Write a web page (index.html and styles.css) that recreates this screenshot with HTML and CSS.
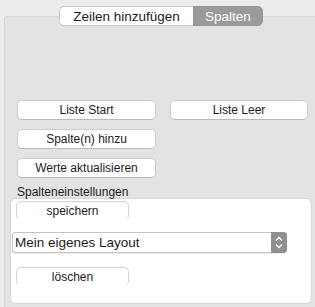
FILE: index.html
```html
<!DOCTYPE html>
<html lang="de">
<head>
    <meta charset="UTF-8">
    <title>Spalten</title>
    <link rel="stylesheet" href="styles.css">
</head>
<body>
    <div class="tabs">
        <div class="segmented">
            <span class="segment">Zeilen hinzufügen</span>
            <span class="segment active">Spalten</span>
        </div>
    </div>

    <div class="panel">
        <div class="button-grid">
            <button class="btn">Liste Start</button>
            <button class="btn">Liste Leer</button>
            <button class="btn">Spalte(n) hinzu</button>
            <span></span>
            <button class="btn">Werte aktualisieren</button>
        </div>

        <div class="group-label">Spalteneinstellungen</div>
        <div class="group">
            <button class="btn btn-small">speichern</button>
            <div class="select">
                <span class="select-text">Mein eigenes Layout</span>
                <span class="stepper">
                    <svg width="16" height="19" viewBox="0 0 16 19">
                        <path d="M5 7.5 L8 4.5 L11 7.5" fill="none" stroke="#fff" stroke-width="1.3"/>
                        <path d="M5 11.5 L8 14.5 L11 11.5" fill="none" stroke="#fff" stroke-width="1.3"/>
                    </svg>
                </span>
            </div>
            <button class="btn btn-small">löschen</button>
        </div>
    </div>
</body>
</html>
```

FILE: styles.css
```css
* {
    margin: 0;
    padding: 0;
    box-sizing: border-box;
}

body {
    font-family: 'Liberation Sans', Arial, sans-serif;
    background: #ececec;
    color: #1c1c1c;
    height: 307px;
    overflow: hidden;
}

.tabs {
    padding: 6px 0 0 59px;
    position: relative;
    z-index: 1;
}

.segmented {
    display: flex;
    width: 204px;
    height: 20px;
}

.segment {
    display: flex;
    align-items: center;
    justify-content: center;
    font-size: 13.5px;
    background: #fff;
    border: 1px solid #c9c9c9;
    border-right: none;
    border-radius: 5px 0 0 5px;
    width: 134px;
}

.segment.active {
    background: #9a9a9a;
    color: #fff;
    border: 1px solid #959595;
    border-radius: 0 5px 5px 0;
    width: 70px;
}

.panel {
    margin: -10px 0 0 4px;
    height: 301px;
    background: #e3e3e3;
    border: 1px solid #d4d4d4;
    border-right: none;
    border-bottom: none;
    border-radius: 4px 0 0 0;
    padding-top: 83px;
}

.button-grid {
    display: grid;
    grid-template-columns: 139px 138px;
    column-gap: 14px;
    row-gap: 9px;
    padding-left: 12px;
}

.btn {
    font-family: inherit;
    font-size: 12px;
    color: #1c1c1c;
    height: 20px;
    background: #fff;
    border: 1px solid #cbcbcb;
    border-bottom-color: #b9b9b9;
    border-radius: 5px;
}

.group-label {
    font-size: 12px;
    padding: 7px 0 0 12px;
    height: 20px;
}

.group {
    margin: 0 3px 0 5px;
    height: 106px;
    background: #fff;
    border: 1px solid #d6d6d6;
    border-radius: 6px;
    padding: 2px 0 0 5px;
    display: flex;
    flex-direction: column;
    align-items: flex-start;
}

.btn-small {
    width: 113px;
    height: 19px;
    border-color: #d2d2d2;
    border-bottom-color: #fff;
}

.select {
    display: flex;
    align-items: center;
    width: 275px;
    height: 21px;
    margin: 12px 0 14px -4px;
    border: 1px solid #c4c4c4;
    border-right: none;
    border-radius: 3px 4px 4px 3px;
    box-shadow: 0 1px 1px #eaeaea;
    background: #fff;
}

.select-text {
    flex: 1;
    font-size: 13.5px;
    padding-left: 2px;
}

.stepper {
    width: 16px;
    height: 21px;
    margin-top: -1px;
    margin-bottom: -1px;
    background: #8f8f8f;
    border-radius: 0 4px 4px 0;
    display: flex;
    align-items: center;
    justify-content: center;
}
```
